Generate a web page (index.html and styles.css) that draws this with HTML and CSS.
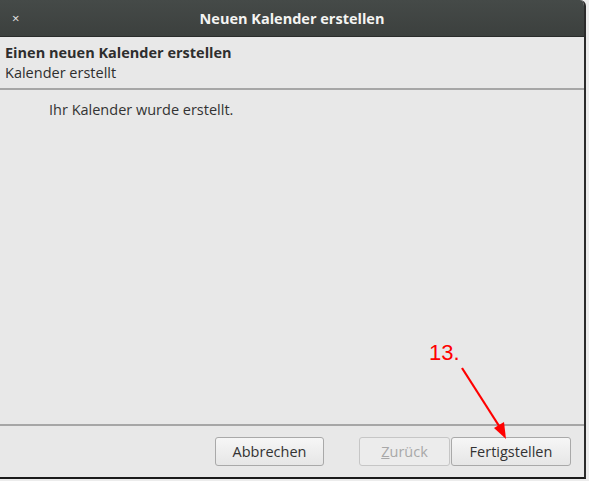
FILE: index.html
```html
<!DOCTYPE html>
<html>
<head>
<meta charset="utf-8">
<link rel="stylesheet" href="styles.css">
</head>
<body>
<div class="window">
  <div class="titlebar">
    <span class="close">×</span>
    <span class="title">Neuen Kalender erstellen</span>
  </div>
  <div class="header">
    <div class="h-title">Einen neuen Kalender erstellen</div>
    <div class="h-sub">Kalender erstellt</div>
  </div>
  <div class="body">
    <p class="msg">Ihr Kalender wurde erstellt.</p>
  </div>
  <div class="actions">
    <button class="btn btn-cancel">Abbrechen</button>
    <button class="btn btn-back" disabled><u>Z</u>urück</button>
    <button class="btn btn-finish">Fertigstellen</button>
  </div>
</div>
<div class="annot">
  <span class="num">13.</span>
  <svg class="arrow" width="589" height="481" viewBox="0 0 589 481">
    <line x1="462" y1="368" x2="501" y2="429" stroke="#ff0000" stroke-width="2.2"/>
    <polygon points="506,439 494,428 504,422" fill="#ff0000"/>
  </svg>
</div>
</body>
</html>
```
FILE: styles.css
```css
html, body {
  margin: 0;
  padding: 0;
  background: #ececec;
  width: 589px;
  height: 481px;
  overflow: hidden;
}
body {
  position: relative;
  font-family: "Open Sans", "DejaVu Sans", sans-serif;
  font-size: 14.5px;
  color: #3c3c3c;
}
.window {
  width: 584px;
  height: 477px;
  background: #e8e8e8;
  border-right: 2px solid #2b2b2b;
  border-bottom: 2px solid #1a1a1a;
  border-top-right-radius: 6px;
  display: flex;
  flex-direction: column;
  overflow: hidden;
}
.titlebar {
  height: 36px;
  flex: none;
  background: linear-gradient(#454a48, #3c403e);
  border-bottom: 1px solid #2a2c2b;
  display: flex;
  align-items: center;
  justify-content: center;
  position: relative;
  color: #f4f4f2;
}
.close {
  position: absolute;
  left: 12px;
  top: 9px;
  font-size: 13px;
  color: #e6e6e6;
}
.title {
  font-weight: bold;
  font-size: 14.5px;
  margin-left: 0;
}
.header {
  padding: 6px 5px 7px 5px;
  border-bottom: 2px solid #a6a6a6;
  height: 38px;
  flex: none;
}
.h-title {
  font-weight: bold;
  color: #2e2e2e;
  line-height: 20px;
}
.h-sub {
  color: #2e2e2e;
  line-height: 19px;
}
.body {
  flex: 1;
  border-bottom: 2px solid #a6a6a6;
}
.msg {
  margin: 10px 0 0 49px;
  line-height: 20px;
  color: #333;
}
.actions {
  height: 51px;
  flex: none;
  display: flex;
  align-items: flex-start;
  padding-top: 11px;
  box-sizing: border-box;
}
.btn {
  font-family: inherit;
  font-size: 14.5px;
  height: 29px;
  border: 1px solid #a9a9a9;
  border-radius: 3px;
  background: linear-gradient(#f6f6f6, #e6e6e6);
  color: #333;
  padding: 0;
}
.btn-cancel { margin-left: 215px; width: 109px; }
.btn-back {
  margin-left: 35px;
  width: 91px;
  color: #a8a8a8;
  border-color: #c6c6c6;
  background: #ececec;
}
.btn-back u { text-decoration-thickness: 1px; }
.btn-finish { margin-left: 1px; width: 120px; }
.annot .num {
  position: absolute;
  left: 429px;
  top: 340px;
  color: #ff0000;
  font-family: "Liberation Sans", sans-serif;
  font-size: 22px;
}
.arrow {
  position: absolute;
  left: 0;
  top: 0;
}
```
